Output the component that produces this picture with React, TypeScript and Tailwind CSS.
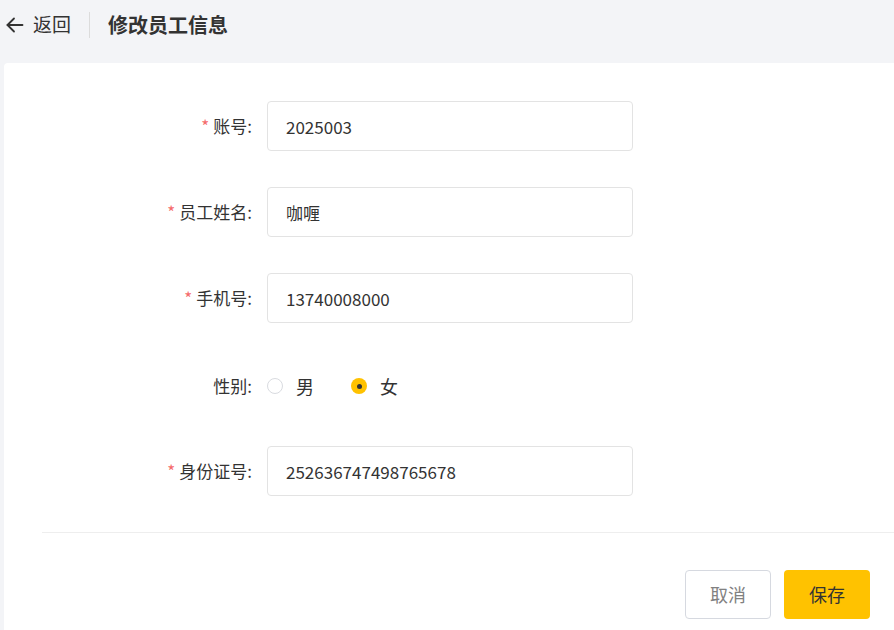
import { useState } from 'react';

type Field = { label: string; value: string; required: boolean };

const fields: Field[] = [
  { label: '账号', value: '2025003', required: true },
  { label: '员工姓名', value: '咖喱', required: true },
  { label: '手机号', value: '13740008000', required: true },
];

function Label({ text, required }: { text: string; required?: boolean }) {
  return (
    <div className="w-[248px] shrink-0 text-right text-[17px] text-[#333]">
      {required && <span className="mr-1 text-[#f56c6c]">*</span>}
      {text}:
    </div>
  );
}

function InputRow({ label, value, required }: Field) {
  return (
    <div className="flex h-[50px] items-center">
      <Label text={label} required={required} />
      <input
        defaultValue={value}
        className="ml-[15px] h-[50px] w-[366px] rounded-[4px] border border-[#e3e3e3] bg-white px-[18px] text-[17px] text-[#333] outline-none"
      />
    </div>
  );
}

function Radio({ checked, label, onClick }: { checked: boolean; label: string; onClick: () => void }) {
  return (
    <button type="button" onClick={onClick} className="flex items-center">
      {checked ? (
        <span className="flex h-[16px] w-[16px] items-center justify-center rounded-full bg-[#ffc200]">
          <span className="h-[5px] w-[5px] rounded-full bg-[#333]" />
        </span>
      ) : (
        <span className="h-[16px] w-[16px] rounded-full border border-[#d9dbe0] bg-white" />
      )}
      <span className="ml-[13px] text-[18px] text-[#333]">{label}</span>
    </button>
  );
}

export default function App() {
  const [sex, setSex] = useState<'男' | '女'>('女');

  return (
    <div
      className="flex h-[630px] w-[894px] flex-col overflow-hidden bg-[#f3f4f7]"
      style={{ fontFamily: '"Noto Sans CJK SC", "Noto Sans", sans-serif' }}
    >
      <header className="flex h-[63px] shrink-0 items-center pb-[16px] pl-[6px] pt-[2px]">
        <button type="button" className="flex items-center text-[19px] text-[#333]">
          <svg width="18" height="18" viewBox="0 0 18 18" fill="none" stroke="#333" strokeWidth="1.8" strokeLinecap="round" strokeLinejoin="round">
            <path d="M16.5 9H1.5" />
            <path d="M8 2.5L1.5 9 8 15.5" />
          </svg>
          <span className="ml-[9px]">返回</span>
        </button>
        <span className="ml-[18px] mr-[18px] h-[26px] w-px bg-[#dcdcdc]" />
        <h1 className="text-[20px] font-bold text-[#333]">修改员工信息</h1>
      </header>

      <main className="ml-[4px] flex-1 rounded-tl-[4px] bg-white pt-[38px]">
        <div className="flex flex-col gap-[36px]">
          {fields.map((f) => (
            <InputRow key={f.label} {...f} />
          ))}
          <div className="flex h-[50px] items-center pt-[4px]">
            <Label text="性别" />
            <div className="ml-[15px] flex items-center gap-[37px]">
              <Radio checked={sex === '男'} label="男" onClick={() => setSex('男')} />
              <Radio checked={sex === '女'} label="女" onClick={() => setSex('女')} />
            </div>
          </div>
          <div className="pt-px">
            <InputRow label="身份证号" value="252636747498765678" required />
          </div>
        </div>

        <div className="ml-[38px] mt-[36px] h-px bg-[#eeeeee]" />

        <div className="flex justify-end gap-[13px] pr-[24px] pt-[37px]">
          <button
            type="button"
            className="h-[49px] w-[86px] rounded-[4px] border border-[#d6d9e0] bg-white text-[18px] text-[#818181]"
          >
            取消
          </button>
          <button type="button" className="h-[49px] w-[86px] rounded-[4px] bg-[#ffc200] text-[18px] text-[#333]">
            保存
          </button>
        </div>
      </main>
    </div>
  );
}
